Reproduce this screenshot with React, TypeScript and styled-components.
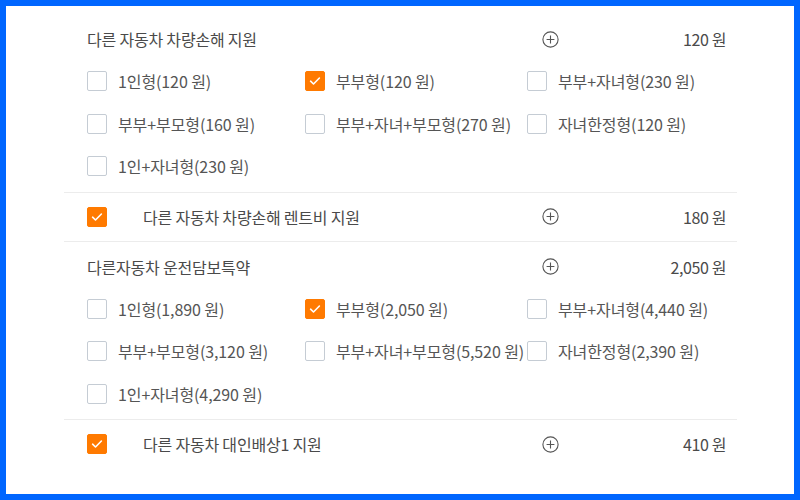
import styled, { createGlobalStyle } from 'styled-components';

const GlobalStyle = createGlobalStyle`
  html, body {
    margin: 0;
    padding: 0;
    background: #ffffff;
  }
  body {
    font-family: "Noto Sans CJK KR", "Noto Sans", sans-serif;
  }
`;

type Option = { label: string; checked?: boolean };

type Group = {
  title: string;
  price: string;
  options: Option[];
};

const groups: Group[] = [
  {
    title: '다른 자동차 차량손해 지원',
    price: '120 원',
    options: [
      { label: '1인형(120 원)' },
      { label: '부부형(120 원)', checked: true },
      { label: '부부+자녀형(230 원)' },
      { label: '부부+부모형(160 원)' },
      { label: '부부+자녀+부모형(270 원)' },
      { label: '자녀한정형(120 원)' },
      { label: '1인+자녀형(230 원)' },
    ],
  },
  {
    title: '다른자동차 운전담보특약',
    price: '2,050 원',
    options: [
      { label: '1인형(1,890 원)' },
      { label: '부부형(2,050 원)', checked: true },
      { label: '부부+자녀형(4,440 원)' },
      { label: '부부+부모형(3,120 원)' },
      { label: '부부+자녀+부모형(5,520 원)' },
      { label: '자녀한정형(2,390 원)' },
      { label: '1인+자녀형(4,290 원)' },
    ],
  },
];

const singles = [
  { title: '다른 자동차 차량손해 렌트비 지원', price: '180 원' },
  { title: '다른 자동차 대인배상1 지원', price: '410 원' },
];

function PlusIcon() {
  return (
    <svg width="17" height="17" viewBox="0 0 17 17" fill="none">
      <circle cx="8.5" cy="8.5" r="7.6" stroke="#555" strokeWidth="1.1" />
      <path d="M8.5 4.6v7.8M4.6 8.5h7.8" stroke="#555" strokeWidth="1.1" />
    </svg>
  );
}

function Check({ checked }: { checked?: boolean }) {
  return (
    <Box $checked={checked}>
      {checked && (
        <svg width="14" height="14" viewBox="0 0 14 14" fill="none">
          <path d="M2.6 7.2l2.9 2.8 5.9-6" stroke="#fff" strokeWidth="1.6" strokeLinecap="round" strokeLinejoin="round" />
        </svg>
      )}
    </Box>
  );
}

function GroupSection({ group }: { group: Group }) {
  return (
    <Section>
      <Header>
        <Title>{group.title}</Title>
        <PlusIcon />
        <Price>{group.price}</Price>
      </Header>
      <Options>
        {group.options.map((o) => (
          <OptionItem key={o.label}>
            <Check checked={o.checked} />
            <OptionLabel>{o.label}</OptionLabel>
          </OptionItem>
        ))}
      </Options>
    </Section>
  );
}

function SingleRow({ title, price }: { title: string; price: string }) {
  return (
    <Single>
      <Check checked />
      <SingleTitle>{title}</SingleTitle>
      <PlusIcon />
      <Price>{price}</Price>
    </Single>
  );
}

export default function App() {
  return (
    <Frame>
      <GlobalStyle />
      <List>
        <GroupSection group={groups[0]} />
        <SingleRow {...singles[0]} />
        <GroupSection group={groups[1]} />
        <SingleRow {...singles[1]} />
      </List>
    </Frame>
  );
}

const Frame = styled.div`
  width: 800px;
  height: 500px;
  box-sizing: border-box;
  border: 6px solid #0066ff;
  background: #fff;
  overflow: hidden;
`;

const List = styled.div`
  width: 673px;
  margin-left: 58px;
  padding-top: 8px;

  & > *:last-child {
    border-bottom: none;
  }
`;

const Section = styled.div`
  padding: 4px 0 4px;
  border-bottom: 1px solid #ececec;

  & + & {
    padding-top: 3px;
  }
`;

const Header = styled.div`
  display: grid;
  grid-template-columns: 1fr 17px 167px;
  align-items: center;
  height: 42px;
  padding: 0 11px 0 23px;
`;

const Title = styled.div`
  font-size: 16px;
  color: #4a4a4a;
  letter-spacing: -0.2px;
`;

const Price = styled.div`
  font-size: 16px;
  color: #4a4a4a;
  text-align: right;
  letter-spacing: -0.4px;
`;

const Options = styled.div`
  display: grid;
  grid-template-columns: 218px 222px 1fr;
  grid-auto-rows: 42.5px;
  padding-left: 23px;
`;

const OptionItem = styled.label`
  display: flex;
  align-items: center;
  gap: 11px;
  white-space: nowrap;
`;

const Box = styled.span<{ $checked?: boolean }>`
  flex: none;
  width: 20px;
  height: 20px;
  box-sizing: border-box;
  border-radius: 2px;
  border: 1px solid ${(p) => (p.$checked ? '#ff7a00' : '#c5ccd4')};
  background: ${(p) => (p.$checked ? '#ff7a00' : '#fff')};
  display: flex;
  align-items: center;
  justify-content: center;
`;

const OptionLabel = styled.span`
  font-size: 16px;
  color: #555;
  letter-spacing: -0.1px;
`;

const Single = styled.div`
  display: grid;
  grid-template-columns: 20px 1fr 17px 167px;
  align-items: center;
  height: 48px;
  padding: 0 11px 0 23px;
  border-bottom: 1px solid #ececec;
`;

const SingleTitle = styled.div`
  font-size: 16px;
  color: #4a4a4a;
  letter-spacing: -0.2px;
  padding-left: 36px;
`;
